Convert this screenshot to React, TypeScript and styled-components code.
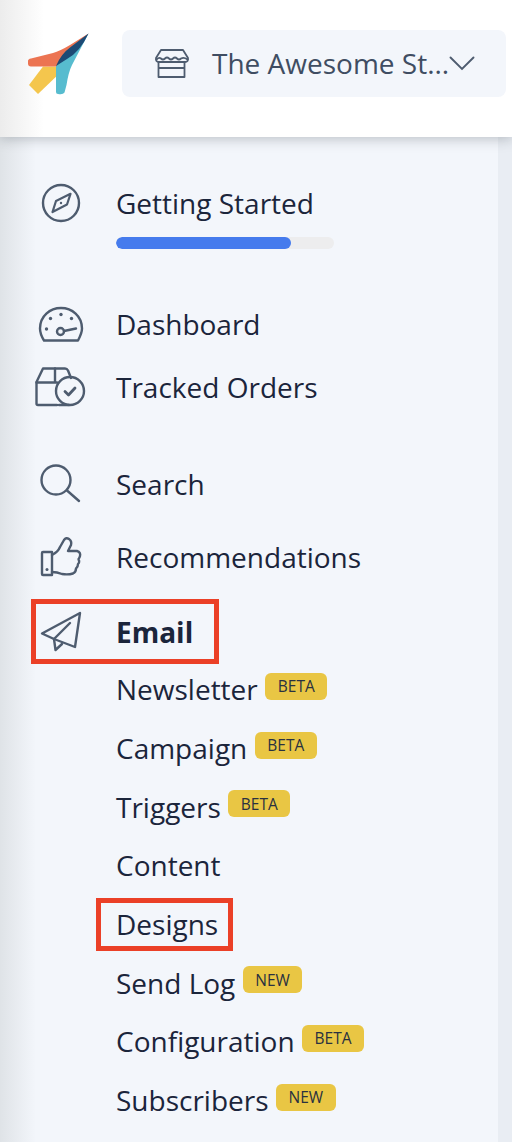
import styled, { createGlobalStyle } from 'styled-components';
import type { ReactNode } from 'react';

const Global = createGlobalStyle`
  html, body {
    margin: 0;
    padding: 0;
    background: #f3f6fb;
  }
  body {
    font-family: "Open Sans", "Liberation Sans", sans-serif;
    overflow: hidden;
  }
`;

const INK = '#4e5c6f';

const LogoIcon = () => (
  <svg width="62" height="62" viewBox="27 33 62 62">
    <path d="M43 66.5H56V76.7L38 94L29 85Z" fill="#f4c64d" />
    <path d="M56 66L88.5 33.5L72 65Q68.5 72 66.5 85L64.5 92.5Q63 95 58 94Q56 94 56 92Z" fill="#57bccf" />
    <path d="M28 61Q28 59 31 58.5L53 53Q60 51 70 45L88.5 33.5L56 66.5H31Q28 66.5 28 63.5Z" fill="#ec7452" />
    <path d="M56 66Q61 54 70 47.5L88.5 33.5Q80 52 67 59Z" fill="#1d4a75" />
  </svg>
);

const StoreIcon = () => (
  <svg width="36" height="32" viewBox="154 51 36 32" fill="none" stroke={INK} strokeWidth="1.8" strokeLinejoin="round" strokeLinecap="round">
    <path d="M161 53H183L188 61Q188.500 65 185 65H159Q155.500 65 156 61Z" />
    <path d="M156.500 62.500Q159 60 161 61.500Q163 63.500 165 61.500Q167 59.500 169 61.500Q171 63.500 173 61.500Q175 59.500 177 61.500Q179 63.500 181 61.500Q184 60 187.500 62.500" />
    <path d="M158.500 65V80H184.500V65M158.500 71H184.500" />
  </svg>
);

const ChevronIcon = () => (
  <svg width="26" height="15" viewBox="0 0 26 15" fill="none" stroke={INK} strokeWidth="1.9" strokeLinecap="round">
    <path d="M1.500 1.500L13 13L24.500 1.500" />
  </svg>
);

const CompassIcon = () => (
  <svg width="40" height="40" viewBox="41 183 40 40" fill="none" stroke={INK} strokeWidth="2.4" strokeLinejoin="round">
    <circle cx="61" cy="203" r="18" />
    <path d="M70.500 193.800L67 204.500L52.500 212L56 201Z" strokeWidth="2.2" />
    <circle cx="61" cy="203" r="1.200" fill={INK} stroke="none" />
  </svg>
);

const GaugeIcon = () => (
  <svg width="46" height="36" viewBox="38 306 46 36" fill="none" stroke={INK} strokeWidth="2.4" strokeLinecap="round" strokeLinejoin="round">
    <path d="M44 340.500H78Q82 333 82 328.500C82 316 72 308 61 308C50 308 40 316 40 328.500Q40 334 44 340.500Z" />
    <circle cx="60.500" cy="331.500" r="3.500" />
    <path d="M64 331L76 328.500" />
    <g fill={INK} stroke="none">
      <circle cx="61" cy="314.500" r="1.700" />
      <circle cx="50.500" cy="318.500" r="1.700" />
      <circle cx="71.500" cy="318.500" r="1.700" />
      <circle cx="46.500" cy="329" r="1.700" />
    </g>
  </svg>
);

const ParcelIcon = () => (
  <svg width="52" height="42" viewBox="36 367 52 42" fill="none" stroke={INK} strokeWidth="2.4" strokeLinecap="round" strokeLinejoin="round">
    <path d="M58 406H39Q37.500 406 37.500 404.500V383L44 369.500H66Q68 369.500 69 371.500L72 379" />
    <path d="M37.500 383.500H58M56 369.500V383.500" />
    <path d="M60 406H70" />
    <circle cx="71" cy="392" r="14" />
    <path d="M66 392.500L69.500 396L76 389" strokeWidth="2.800" />
  </svg>
);

const SearchIcon = () => (
  <svg width="44" height="44" viewBox="40 464 44 44" fill="none" stroke={INK} strokeWidth="2.4" strokeLinecap="round">
    <circle cx="57" cy="482" r="14.500" />
    <path d="M68 492.500L80 503" />
  </svg>
);

const ThumbIcon = () => (
  <svg width="42" height="42" viewBox="40 537 42 42" fill="none" stroke={INK} strokeWidth="2.4" strokeLinecap="round" strokeLinejoin="round">
    <path d="M43 553H52V576H43Q42 576 42 575V554Q42 553 43 553Z" />
    <path d="M52 556Q58 553 60 548L64 541Q66 538 69 540Q72 542 71 546L68 552H77Q81 553 80 557Q79.500 559 78.500 560Q80 563 78 565Q78 568 76 569.500Q76 573 73 574.500Q68 576 62 575Q57 573 52 573" />
    <circle cx="47" cy="570.500" r="1.500" fill={INK} stroke="none" />
  </svg>
);

const PlaneIcon = () => (
  <svg width="42" height="42" viewBox="40 611 42 42" fill="none" stroke={INK} strokeWidth="2.4" strokeLinecap="round" strokeLinejoin="round">
    <path d="M80 613L42 633.500L54 639L75 647Z" />
    <path d="M54 639L55.500 650L62 644" />
    <path d="M54 639L70 623" />
  </svg>
);

type SubItem = { label: string; badge?: 'BETA' | 'NEW'; marked?: boolean };

const subItems: SubItem[] = [
  { label: 'Newsletter', badge: 'BETA' },
  { label: 'Campaign', badge: 'BETA' },
  { label: 'Triggers', badge: 'BETA' },
  { label: 'Content' },
  { label: 'Designs', marked: true },
  { label: 'Send Log', badge: 'NEW' },
  { label: 'Configuration', badge: 'BETA' },
  { label: 'Subscribers', badge: 'NEW' },
];

const NavRow = ({ icon, height, children }: { icon: ReactNode; height: number; children: ReactNode }) => (
  <S.Row $height={height}>
    <S.IconCell>{icon}</S.IconCell>
    {children}
  </S.Row>
);

const App = () => {
  return (
    <S.Page>
      <Global />
      <S.Header>
        <S.LogoCell>
          <LogoIcon />
        </S.LogoCell>
        <S.StoreSelect>
          <StoreIcon />
          <S.StoreName>The Awesome St...</S.StoreName>
          <ChevronIcon />
        </S.StoreSelect>
      </S.Header>

      <S.Sidebar>
        <S.Group $bottom={44}>
          <NavRow icon={<CompassIcon />} height={44}>
            <S.Label>Getting Started</S.Label>
          </NavRow>
          <S.Progress>
            <S.ProgressFill style={{ width: `${(175 / 218) * 100}%` }} />
          </S.Progress>
        </S.Group>

        <S.Group $bottom={29}>
          <NavRow icon={<GaugeIcon />} height={63}>
            <S.Label>Dashboard</S.Label>
          </NavRow>
          <NavRow icon={<ParcelIcon />} height={63}>
            <S.Label>Tracked Orders</S.Label>
          </NavRow>
        </S.Group>

        <S.Group $bottom={0}>
          <NavRow icon={<SearchIcon />} height={73}>
            <S.Label>Search</S.Label>
          </NavRow>
          <NavRow icon={<ThumbIcon />} height={73}>
            <S.Label>Recommendations</S.Label>
          </NavRow>
          <S.EmailRow>
            <S.EmailMark />
            <S.IconCell>
              <PlaneIcon />
            </S.IconCell>
            <S.Label $bold>Email</S.Label>
          </S.EmailRow>
          <S.SubList>
            {subItems.map((item) => (
              <S.SubRow key={item.label}>
                <S.SubLabel>
                  {item.label}
                  {item.marked && <S.DesignsMark />}
                </S.SubLabel>
                {item.badge && <S.Badge>{item.badge}</S.Badge>}
              </S.SubRow>
            ))}
          </S.SubList>
        </S.Group>
      </S.Sidebar>
    </S.Page>
  );
};

const S = {
  Page: styled.div`
    width: 512px;
    height: 1142px;
    overflow: hidden;
    display: flex;
    flex-direction: column;
  `,
  Header: styled.header`
    position: relative;
    z-index: 1;
    height: 137px;
    flex: none;
    display: flex;
    align-items: flex-start;
    padding: 30px 6px 0 27px;
    box-sizing: border-box;
    background: linear-gradient(to right, #ececec 0, #ffffff 44px);
    box-shadow: 0 2px 12px rgba(40, 50, 60, 0.28);
  `,
  LogoCell: styled.div`
    width: 95px;
    height: 65px;
    flex: none;
    padding-top: 3px;
    box-sizing: border-box;
  `,
  StoreSelect: styled.div`
    flex: 1;
    height: 67px;
    display: flex;
    align-items: center;
    padding: 0 31px 0 32px;
    box-sizing: border-box;
    background: #f3f6fb;
    border-radius: 8px;
  `,
  StoreName: styled.span`
    flex: 1;
    margin-left: 22px;
    padding-bottom: 2px;
    font-size: 28px;
    color: #3f4d62;
    white-space: nowrap;
  `,
  Sidebar: styled.nav`
    flex: 1;
    display: flex;
    flex-direction: column;
    padding-top: 45px;
    background:
      linear-gradient(to right, transparent 498px, #e9edf3 498px),
      linear-gradient(to right, #dfe3e7 0, #f3f6fb 36px);
  `,
  Group: styled.div<{ $bottom: number }>`
    display: flex;
    flex-direction: column;
    margin-bottom: ${(props) => props.$bottom}px;
  `,
  Row: styled.div<{ $height: number }>`
    height: ${(props) => props.$height}px;
    display: flex;
    align-items: center;
  `,
  EmailRow: styled.div`
    position: relative;
    height: 58px;
    margin-top: 10px;
    display: flex;
    align-items: center;
  `,
  EmailMark: styled.span`
    position: absolute;
    left: 31px;
    top: -5px;
    width: 188px;
    height: 65px;
    box-sizing: border-box;
    border: 5px solid #eb4027;
  `,
  IconCell: styled.div`
    width: 60px;
    margin: 0 25px 0 31px;
    padding-bottom: 2px;
    flex: none;
    display: flex;
    justify-content: center;
    align-items: center;
  `,
  Label: styled.span<{ $bold?: boolean }>`
    padding-bottom: 2px;
    font-size: 28px;
    font-weight: ${(props) => (props.$bold ? 700 : 400)};
    color: #1b253b;
    white-space: nowrap;
  `,
  Progress: styled.div`
    width: 218px;
    height: 12px;
    margin: 11px 0 0 116px;
    background: #ededee;
    border-radius: 6px;
    overflow: hidden;
  `,
  ProgressFill: styled.div`
    height: 100%;
    background: #457bed;
    border-radius: 6px;
  `,
  SubList: styled.div`
    display: flex;
    flex-direction: column;
    margin-top: -1px;
    padding-left: 116px;
  `,
  SubRow: styled.div`
    height: 58.7px;
    display: flex;
    align-items: center;
    gap: 7.5px;
  `,
  SubLabel: styled.span`
    position: relative;
    padding-bottom: 2px;
    font-size: 28px;
    color: #1b253b;
    white-space: nowrap;
  `,
  DesignsMark: styled.span`
    position: absolute;
    left: -20px;
    top: -7px;
    width: 137px;
    height: 53px;
    box-sizing: border-box;
    border: 5px solid #eb4027;
  `,
  Badge: styled.span`
    height: 27px;
    margin-bottom: 8px;
    padding: 0 12.5px;
    display: flex;
    align-items: center;
    font-size: 15.5px;
    color: #2a3140;
    background: #e9c644;
    border-radius: 6px;
  `,
};

export default App;
